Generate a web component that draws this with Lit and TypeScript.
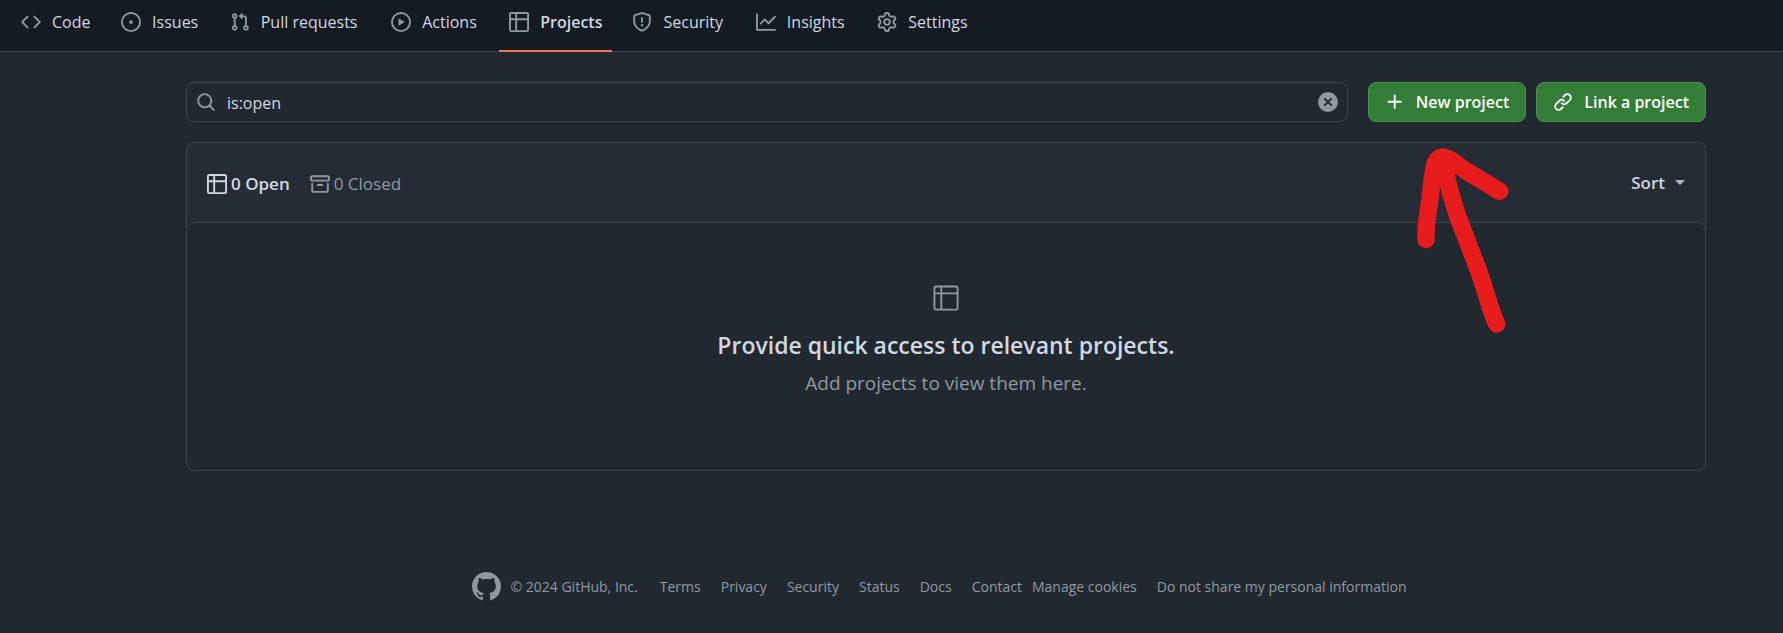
import { LitElement, html, css, svg } from "lit";
import { customElement, property } from "lit/decorators.js";
import { classMap } from "lit/directives/class-map.js";

const ICONS: Record<string, string> = {
  code: "m11.28 3.22 4.25 4.25a.75.75 0 0 1 0 1.06l-4.25 4.25a.749.749 0 0 1-1.275-.326.749.749 0 0 1 .215-.734L13.94 8l-3.72-3.72a.749.749 0 0 1 .326-1.275.749.749 0 0 1 .734.215Zm-6.56 0a.751.751 0 0 1 1.042.018.751.751 0 0 1 .018 1.042L2.06 8l3.72 3.72a.749.749 0 0 1-.326 1.275.749.749 0 0 1-.734-.215L.47 8.53a.75.75 0 0 1 0-1.06Z",
  issue: "M8 9.5a1.5 1.5 0 1 0 0-3 1.5 1.5 0 0 0 0 3Z M8 0a8 8 0 1 1 0 16A8 8 0 0 1 8 0ZM1.5 8a6.5 6.5 0 1 0 13 0 6.5 6.5 0 0 0-13 0Z",
  pull: "M1.5 3.25a2.25 2.25 0 1 1 3 2.122v5.256a2.251 2.251 0 1 1-1.5 0V5.372A2.25 2.25 0 0 1 1.5 3.25Zm5.677-.177L9.573.677A.25.25 0 0 1 10 .854V2.5h1A2.5 2.5 0 0 1 13.5 5v5.628a2.251 2.251 0 1 1-1.5 0V5a1 1 0 0 0-1-1h-1v1.646a.25.25 0 0 1-.427.177L7.177 3.427a.25.25 0 0 1 0-.354ZM3.75 2.5a.75.75 0 1 0 0 1.5.75.75 0 0 0 0-1.5Zm0 9.5a.75.75 0 1 0 0 1.5.75.75 0 0 0 0-1.5Zm8.25.75a.75.75 0 1 0 1.5 0 .75.75 0 0 0-1.5 0Z",
  play: "M8 0a8 8 0 1 1 0 16A8 8 0 0 1 8 0ZM1.5 8a6.5 6.5 0 1 0 13 0 6.5 6.5 0 0 0-13 0Zm4.879-2.773 4.264 2.559a.25.25 0 0 1 0 .428l-4.264 2.559A.25.25 0 0 1 6 10.559V5.442a.25.25 0 0 1 .379-.215Z",
  table: "M0 1.75C0 .784.784 0 1.75 0h12.5C15.216 0 16 .784 16 1.75v12.5A1.75 1.75 0 0 1 14.25 16H1.75A1.75 1.75 0 0 1 0 14.25ZM6.5 6.5v8h7.75a.25.25 0 0 0 .25-.25V6.5Zm8-1.5V1.75a.25.25 0 0 0-.25-.25H6.5V5Zm-13 1.5v7.75c0 .138.112.25.25.25H5v-8ZM5 5V1.5H1.75a.25.25 0 0 0-.25.25V5Z",
  shield: "M7.467.133a1.748 1.748 0 0 1 1.066 0l5.25 1.68A1.75 1.75 0 0 1 15 3.48V7c0 1.566-.32 3.182-1.303 4.682-.983 1.498-2.585 2.813-5.032 3.855a1.697 1.697 0 0 1-1.33 0c-2.447-1.042-4.049-2.357-5.032-3.855C1.32 10.182 1 8.566 1 7V3.48a1.75 1.75 0 0 1 1.217-1.667Zm.61 1.429a.25.25 0 0 0-.153 0l-5.25 1.68a.25.25 0 0 0-.174.238V7c0 1.358.275 2.666 1.057 3.86.784 1.194 2.121 2.34 4.366 3.297a.196.196 0 0 0 .154 0c2.245-.956 3.582-2.104 4.366-3.298C13.225 9.666 13.5 8.36 13.5 7V3.48a.251.251 0 0 0-.174-.237l-5.25-1.68ZM8.75 4.75v3a.75.75 0 0 1-1.5 0v-3a.75.75 0 0 1 1.5 0ZM9 10.5a1 1 0 1 1-2 0 1 1 0 0 1 2 0Z",
  graph: "M1.5 1.75V13.5h13.75a.75.75 0 0 1 0 1.5H.75a.75.75 0 0 1-.75-.75V1.75a.75.75 0 0 1 1.5 0Zm14.28 2.53-5.25 5.25a.75.75 0 0 1-1.06 0L7 7.06 4.28 9.78a.751.751 0 0 1-1.042-.018.751.751 0 0 1-.018-1.042l3.25-3.25a.75.75 0 0 1 1.06 0L10 7.94l4.72-4.72a.751.751 0 0 1 1.042.018.751.751 0 0 1 .018 1.042Z",
  gear: "M8 0a8.2 8.2 0 0 1 .701.031C9.444.095 9.99.645 10.16 1.29l.288 1.107c.018.066.079.158.212.224.231.114.454.243.668.386.123.082.233.09.299.071l1.103-.303c.644-.176 1.392.021 1.82.63.27.385.506.792.704 1.218.315.675.111 1.422-.364 1.891l-.814.806c-.049.048-.098.147-.088.294.016.257.016.515 0 .772-.01.147.038.246.088.294l.814.806c.475.469.679 1.216.364 1.891a7.977 7.977 0 0 1-.704 1.217c-.428.61-1.176.807-1.82.63l-1.102-.302c-.067-.019-.177-.011-.3.071a5.909 5.909 0 0 1-.668.386c-.133.066-.194.158-.211.224l-.29 1.106c-.168.646-.715 1.196-1.458 1.26a8.006 8.006 0 0 1-1.402 0c-.743-.064-1.289-.614-1.458-1.26l-.289-1.106c-.018-.066-.079-.158-.212-.224a5.738 5.738 0 0 1-.668-.386c-.123-.082-.233-.09-.299-.071l-1.103.303c-.644.176-1.392-.021-1.82-.63a8.12 8.12 0 0 1-.704-1.218c-.315-.675-.111-1.422.363-1.891l.815-.806c.05-.048.098-.147.088-.294a6.214 6.214 0 0 1 0-.772c.01-.147-.038-.246-.088-.294l-.815-.806C.635 6.045.431 5.298.746 4.623a7.92 7.92 0 0 1 .704-1.217c.428-.61 1.176-.807 1.82-.63l1.102.302c.067.019.177.011.3-.071.214-.143.437-.272.668-.386.133-.066.194-.158.211-.224l.29-1.106C6.009.645 6.556.095 7.299.03 7.53.01 7.764 0 8 0Zm-.571 1.525c-.036.003-.108.036-.137.146l-.289 1.105c-.147.561-.549.967-.998 1.189-.173.086-.34.183-.5.29-.417.278-.97.423-1.529.27l-1.103-.303c-.109-.03-.175.016-.195.045-.22.312-.412.644-.573.99-.014.031-.021.11.059.19l.815.806c.411.406.562.957.53 1.456a4.709 4.709 0 0 0 0 .582c.032.499-.119 1.05-.53 1.456l-.815.806c-.081.08-.073.159-.059.19.162.346.353.677.573.989.02.03.085.076.195.046l1.102-.303c.56-.153 1.113-.008 1.53.27.161.107.328.204.501.29.447.222.85.629.997 1.189l.289 1.105c.029.109.101.143.137.146a6.6 6.6 0 0 0 1.142 0c.036-.003.108-.036.137-.146l.289-1.105c.147-.561.549-.967.998-1.189.173-.086.34-.183.5-.29.417-.278.97-.423 1.529-.27l1.103.303c.109.029.175-.016.195-.045.22-.313.411-.644.573-.99.014-.031.021-.11-.059-.19l-.815-.806c-.411-.406-.562-.957-.53-1.456a4.709 4.709 0 0 0 0-.582c-.032-.499.119-1.05.53-1.456l.815-.806c.081-.08.073-.159.059-.19a6.464 6.464 0 0 0-.573-.989c-.02-.03-.085-.076-.195-.046l-1.102.303c-.56.153-1.113.008-1.53-.27a4.44 4.44 0 0 0-.501-.29c-.447-.222-.85-.629-.997-1.189l-.289-1.105c-.029-.11-.101-.143-.137-.146a6.6 6.6 0 0 0-1.142 0ZM11 8a3 3 0 1 1-6 0 3 3 0 0 1 6 0ZM9.5 8a1.5 1.5 0 1 0-3.001.001A1.5 1.5 0 0 0 9.5 8Z",
  search: "M10.68 11.74a6 6 0 0 1-7.922-8.982 6 6 0 0 1 8.982 7.922l3.04 3.04a.749.749 0 0 1-.326 1.275.749.749 0 0 1-.734-.215ZM11.5 7a4.499 4.499 0 1 0-8.997 0A4.499 4.499 0 0 0 11.5 7Z",
  clear: "M2.343 13.657A8 8 0 1 1 13.658 2.343 8 8 0 0 1 2.343 13.657ZM6.03 4.97a.751.751 0 0 0-1.042.018.751.751 0 0 0-.018 1.042L6.94 8 4.97 9.97a.749.749 0 0 0 .326 1.275.749.749 0 0 0 .734-.215L8 9.06l1.97 1.97a.749.749 0 0 0 1.275-.326.749.749 0 0 0-.215-.734L9.06 8l1.97-1.97a.749.749 0 0 0-.326-1.275.749.749 0 0 0-.734.215L8 6.94Z",
  plus: "M7.75 2a.75.75 0 0 1 .75.75V7h4.25a.75.75 0 0 1 0 1.5H8.5v4.25a.75.75 0 0 1-1.5 0V8.5H2.75a.75.75 0 0 1 0-1.5H7V2.75A.75.75 0 0 1 7.75 2Z",
  link: "m7.775 3.275 1.25-1.25a3.5 3.5 0 1 1 4.95 4.95l-2.5 2.5a3.5 3.5 0 0 1-4.95 0 .751.751 0 0 1 .018-1.042.751.751 0 0 1 1.042-.018 1.998 1.998 0 0 0 2.83 0l2.5-2.5a2.002 2.002 0 0 0-2.83-2.83l-1.25 1.25a.751.751 0 0 1-1.042-.018.751.751 0 0 1-.018-1.042Zm-4.69 9.64a1.998 1.998 0 0 0 2.83 0l1.25-1.25a.751.751 0 0 1 1.042.018.751.751 0 0 1 .018 1.042l-1.25 1.25a3.5 3.5 0 1 1-4.95-4.95l2.5-2.5a3.5 3.5 0 0 1 4.95 0 .751.751 0 0 1-.018 1.042.751.751 0 0 1-1.042.018 1.998 1.998 0 0 0-2.83 0l-2.5 2.5a1.998 1.998 0 0 0 0 2.83Z",
  archive: "M0 2.75C0 1.784.784 1 1.75 1h12.5c.966 0 1.75.784 1.75 1.75v1.5A1.75 1.75 0 0 1 14.25 6H1.75A1.75 1.75 0 0 1 0 4.25ZM1.75 7a.75.75 0 0 1 .75.75v5.5c0 .138.112.25.25.25h10.5a.25.25 0 0 0 .25-.25v-5.5a.75.75 0 0 1 1.5 0v5.5A1.75 1.75 0 0 1 13.25 15H2.75A1.75 1.75 0 0 1 1 13.25v-5.5A.75.75 0 0 1 1.75 7Zm0-4.5a.25.25 0 0 0-.25.25v1.5c0 .138.112.25.25.25h12.5a.25.25 0 0 0 .25-.25v-1.5a.25.25 0 0 0-.25-.25ZM6.25 8h3.5a.75.75 0 0 1 0 1.5h-3.5a.75.75 0 0 1 0-1.5Z",
  github: "M8 0c4.42 0 8 3.58 8 8a8.013 8.013 0 0 1-5.45 7.59c-.4.08-.55-.17-.55-.38 0-.27.01-1.13.01-2.2 0-.75-.25-1.23-.54-1.48 1.78-.2 3.65-.88 3.65-3.95 0-.88-.31-1.59-.82-2.15.08-.2.36-1.02-.08-2.12 0 0-.67-.22-2.2.82-.64-.18-1.32-.27-2-.27-.68 0-1.36.09-2 .27-1.53-1.03-2.2-.82-2.2-.82-.44 1.1-.16 1.92-.08 2.12-.51.56-.82 1.28-.82 2.15 0 3.06 1.86 3.75 3.64 3.95-.23.2-.44.55-.51 1.07-.46.21-1.61.55-2.33-.66-.15-.24-.6-.83-1.23-.82-.67.01-.27.38.01.53.34.19.73.9.82 1.13.16.45.68 1.31 2.69.94 0 .67.01 1.3.01 1.49 0 .21-.15.45-.55.38A7.995 7.995 0 0 1 0 8c0-4.42 3.58-8 8-8Z",
  table24: "M3.75 2h16.5c.966 0 1.75.784 1.75 1.75v16.5A1.75 1.75 0 0 1 20.25 22H3.75A1.75 1.75 0 0 1 2 20.25V3.75C2 2.784 2.784 2 3.75 2ZM9 9v11.5h11.25a.25.25 0 0 0 .25-.25V9Zm11.5-1.5V3.75a.25.25 0 0 0-.25-.25H9v4ZM3.5 9v11.25c0 .138.112.25.25.25H7.5V9Zm4-1.5v-4H3.75a.25.25 0 0 0-.25.25V7.5Z",
};

@customElement("gh-icon")
class GhIcon extends LitElement {
  @property() name = "";
  @property({ type: Number }) grid = 16;

  static styles = css`
    :host { display: inline-flex; flex: none; width: 20px; height: 20px; }
    svg { width: 100%; height: 100%; fill: currentColor; fill-rule: evenodd; }
  `;

  render() {
    return html`<svg viewBox="0 0 ${this.grid} ${this.grid}" aria-hidden="true">
      ${svg`<path d=${ICONS[this.name]}></path>`}
    </svg>`;
  }
}

const TABS = [
  ["code", "Code"],
  ["issue", "Issues"],
  ["pull", "Pull requests"],
  ["play", "Actions"],
  ["table", "Projects"],
  ["shield", "Security"],
  ["graph", "Insights"],
  ["gear", "Settings"],
];

const FOOTER_LINKS = ["Terms", "Privacy", "Security", "Status", "Docs", "Contact"];

@customElement("app-root")
class AppRoot extends LitElement {
  static styles = css`
    :host {
      display: block;
      min-height: 100vh;
      background: #212830;
      color: #d1d7e0;
      font: 16px/24px "Open Sans", "Noto Sans", sans-serif;
    }
    * { box-sizing: border-box; }
    a { color: inherit; text-decoration: none; }
    button, input { font: inherit; color: inherit; margin: 0; }
    button { cursor: pointer; }

    .tabs {
      display: flex;
      gap: 10px;
      height: 52px;
      padding: 0 11px;
      background: #151b23;
      border-bottom: 1px solid #3d444d;
    }
    .tab {
      display: flex;
      align-items: center;
      gap: 11px;
      height: 52px;
      padding: 0 10px 6px;
      border-bottom: 2px solid transparent;
      white-space: nowrap;
    }
    .tab gh-icon { color: #9198a1; }
    .label { display: grid; }
    /* Reserves the bold width so selecting a tab never shifts its neighbours. */
    .label::after {
      content: attr(data-text);
      height: 0;
      overflow: hidden;
      visibility: hidden;
      font-weight: 600;
    }
    .tab.current { font-weight: 600; border-bottom-color: #ec775c; }

    .content { padding: 30px 77px 0 186px; }
    .toolbar { display: flex; gap: 10px; margin-bottom: 20px; }
    .search {
      flex: 1;
      display: flex;
      align-items: center;
      height: 40px;
      margin-right: 10px;
      padding: 0 9px;
      border: 1px solid #3d444d;
      border-radius: 8px;
      color: #9198a1;
    }
    .query {
      flex: 1;
      min-width: 0;
      height: 38px;
      padding: 2px 11px 0;
      border: 0;
      outline: 0;
      background: none;
      color: #d1d7e0;
    }
    .plain { display: flex; align-items: center; padding: 0; border: 0; background: none; }
    .primary {
      display: flex;
      align-items: center;
      gap: 11px;
      height: 40px;
      padding: 0 16px;
      border: 1px solid #46954a;
      border-radius: 8px;
      background: #347d39;
      color: #fff;
      font-weight: 600;
      white-space: nowrap;
    }

    .board {
      position: relative;
      border: 1px solid #3d444d;
      border-radius: 8px;
      background: #262c36;
    }
    .board-head {
      display: flex;
      align-items: center;
      justify-content: space-between;
      height: 79px;
      padding: 0 20px;
      font-size: 17px;
    }
    .filters { display: flex; gap: 20px; padding-top: 2px; }
    .filter { display: flex; align-items: center; gap: 4px; color: #9198a1; }
    .filter.on { color: #d1d7e0; font-weight: 600; }
    .sort { gap: 10px; font-weight: 600; }
    .caret {
      border: 5px solid transparent;
      border-top-color: #b1b8c1;
      border-bottom: 0;
    }
    .blank {
      display: flex;
      flex-direction: column;
      align-items: center;
      padding: 60px 40px 72px;
      border-top: 1px solid #3d444d;
      border-radius: 8px;
      background: #212830;
      color: #9198a1;
      text-align: center;
    }
    .blank gh-icon { width: 30px; height: 30px; }
    .title {
      margin: 12px 0 3px;
      color: #d1d7e0;
      font-size: 23px;
      line-height: 40px;
      font-weight: 600;
    }
    .hint { margin: 0; font-size: 19px; line-height: 30px; }

    .arrow {
      position: absolute;
      top: 0;
      right: 186px;
      width: 110px;
      height: 200px;
      fill: none;
      stroke: #e81c1c;
      stroke-width: 17.4;
      stroke-linecap: round;
      stroke-linejoin: round;
      pointer-events: none;
    }

    .footer {
      display: flex;
      align-items: center;
      justify-content: center;
      gap: 10px;
      padding: 101px 77px 30px 172px;
      color: #9198a1;
      font-size: 14px;
      line-height: 20px;
      white-space: nowrap;
    }
    .footer gh-icon { width: 29px; height: 29px; }
    .links { display: flex; gap: 20px; margin: 0; padding: 0; list-style: none; }
    .legal { margin-left: 12px; }
  `;

  render() {
    return html`
      <nav class="tabs" aria-label="Repository">
        ${TABS.map(([icon, text]) => html`
          <a href="#" class=${classMap({ tab: true, current: text === "Projects" })}>
            <gh-icon name=${icon}></gh-icon>
            <span class="label" data-text=${text}>${text}</span>
          </a>`)}
      </nav>
      <main class="content">
        <div class="toolbar">
          <div class="search">
            <gh-icon name="search"></gh-icon>
            <input class="query" type="text" aria-label="Search projects" .value=${"is:open"} />
            <button class="plain" aria-label="Clear"><gh-icon name="clear"></gh-icon></button>
          </div>
          <button class="primary"><gh-icon name="plus"></gh-icon>New project</button>
          <button class="primary"><gh-icon name="link"></gh-icon>Link a project</button>
        </div>
        <section class="board">
          <div class="board-head">
            <div class="filters">
              <a href="#" class="filter on"><gh-icon name="table"></gh-icon>0 Open</a>
              <a href="#" class="filter"><gh-icon name="archive"></gh-icon>0 Closed</a>
            </div>
            <button class="plain sort">Sort<span class="caret"></span></button>
          </div>
          <div class="blank">
            <gh-icon name="table24" grid="24"></gh-icon>
            <h2 class="title">Provide quick access to relevant projects.</h2>
            <p class="hint">Add projects to view them here.</p>
          </div>
          <svg class="arrow" viewBox="0 0 110 200" aria-hidden="true">
            <path d="M87.7 181C82 169 79 155 69.3 127C61 105 56 92 49.3 75C44 58 40 47 37.7 33.7L32 14.5C40 13 45 20 55 26.5L90.7 48.3" />
            <path d="M17 96.5C16.5 80 19 72 21 56C23 38 23.5 30 26 21C28 16 30 14.5 33 14.2L37 34" />
          </svg>
        </section>
      </main>
      <footer class="footer">
        <a href="#" class="plain" aria-label="GitHub"><gh-icon name="github"></gh-icon></a>
        <span>© 2024 GitHub, Inc.</span>
        <ul class="links legal">
          ${FOOTER_LINKS.map((text) => html`<li><a href="#">${text}</a></li>`)}
        </ul>
        <ul class="links">
          <li><a href="#">Manage cookies</a></li>
          <li><a href="#">Do not share my personal information</a></li>
        </ul>
      </footer>
    `;
  }
}
